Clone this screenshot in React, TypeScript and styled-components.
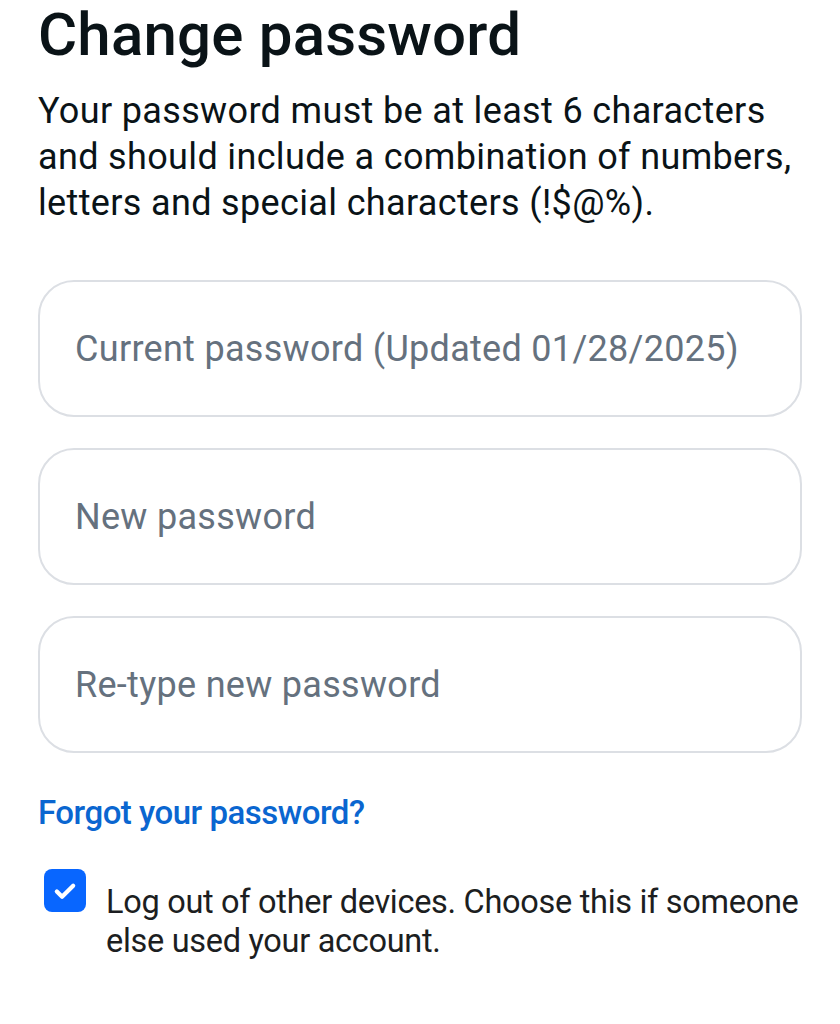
import styled, { createGlobalStyle } from "styled-components";

const GlobalStyle = createGlobalStyle`
  html, body {
    margin: 0;
    padding: 0;
    background: #ffffff;
  }
  body {
    font-family: Roboto, "Liberation Sans", sans-serif;
    color: #1c1e21;
  }
`;

const Page = styled.main`
  width: 840px;
  box-sizing: border-box;
  padding: 0 38px;
  display: flex;
  flex-direction: column;
`;

const Title = styled.h1`
  font-weight: 500;
  font-size: 60px;
  line-height: 70px;
  letter-spacing: 0.2px;
  margin: 0 0 18px;
  color: #0a1317;
`;

const Intro = styled.p`
  font-size: 36px;
  line-height: 46px;
  letter-spacing: 0.35px;
  margin: 0 0 54px;
  color: #0a1317;
`;

const Fields = styled.div`
  display: flex;
  flex-direction: column;
  gap: 31px;
`;

const Field = styled.label`
  display: flex;
  align-items: center;
  height: 137px;
  box-sizing: border-box;
  border: 2px solid #dcdfe4;
  border-radius: 36px;
  padding: 0 35px;
`;

const Input = styled.input`
  border: none;
  outline: none;
  background: transparent;
  width: 100%;
  padding: 0;
  font-family: inherit;
  font-size: 36px;
  letter-spacing: 0.3px;
  color: #1c1e21;

  &::placeholder {
    color: #65717e;
  }
`;

const ForgotLink = styled.a`
  display: block;
  margin: 40px 0 36px;
  font-size: 33px;
  line-height: 40px;
  font-weight: 500;
  letter-spacing: -0.5px;
  color: #0a66d0;
  text-decoration: none;
`;

const CheckRow = styled.label`
  display: flex;
  align-items: flex-start;
  gap: 20px;
  padding-left: 6px;
`;

const Box = styled.span`
  flex: none;
  width: 42px;
  height: 43px;
  border-radius: 8px;
  background: #0866ff;
  display: flex;
  align-items: center;
  justify-content: center;
`;

const CheckText = styled.span`
  font-size: 32.5px;
  line-height: 39px;
  letter-spacing: -0.3px;
  color: #1c1e21;
  padding-top: 14px;
`;

export default function App() {
  return (
    <>
      <GlobalStyle />
      <Page>
        <Title>Change password</Title>
        <Intro>
          Your password must be at least 6 characters
          <br />
          and should include a combination of numbers,
          <br />
          letters and special characters (!$@%).
        </Intro>
        <Fields>
          <Field>
            <Input type="password" placeholder="Current password (Updated 01/28/2025)" />
          </Field>
          <Field>
            <Input type="password" placeholder="New password" />
          </Field>
          <Field>
            <Input type="password" placeholder="Re-type new password" />
          </Field>
        </Fields>
        <ForgotLink href="#">Forgot your password?</ForgotLink>
        <CheckRow>
          <Box>
            <svg width="28" height="28" viewBox="0 0 24 24" fill="none">
              <path
                d="M5 12.5l4.5 4.5L19 7.5"
                stroke="#ffffff"
                strokeWidth="3.6"
                strokeLinecap="round"
                strokeLinejoin="round"
              />
            </svg>
          </Box>
          <CheckText>
            Log out of other devices. Choose this if someone else used your
            account.
          </CheckText>
        </CheckRow>
      </Page>
    </>
  );
}
